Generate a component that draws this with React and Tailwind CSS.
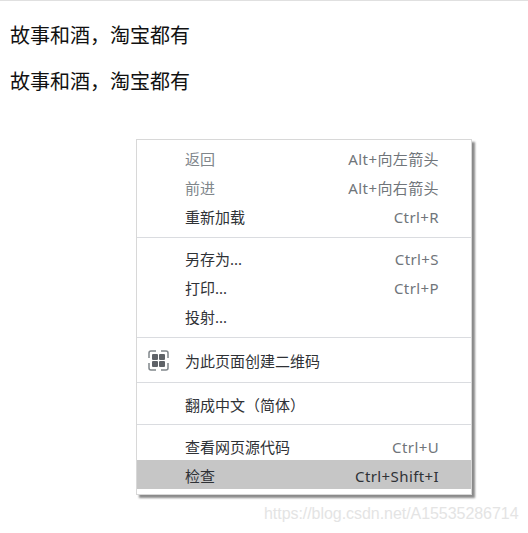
const menuFont = { fontFamily: '"Noto Sans", "Noto Sans CJK SC", sans-serif' };

function Qr() {
  return (
    <svg width="21" height="21" viewBox="0 0 21 21" fill="none">
      <path d="M1 8V3a2 2 0 0 1 2-2h5M13 1h5a2 2 0 0 1 2 2v5M20 13v5a2 2 0 0 1-2 2h-5M8 20H3a2 2 0 0 1-2-2v-5" stroke="#80868b" strokeWidth="1.500" />
      <rect x="4" y="4" width="6" height="6" rx="1" fill="#5f6368" />
      <rect x="11" y="4" width="6" height="6" rx="1" fill="#5f6368" />
      <rect x="4" y="11" width="6" height="6" rx="1" fill="#5f6368" />
      <rect x="11" y="11" width="6" height="6" rx="1" fill="#5f6368" />
    </svg>
  );
}

function Item({ label, keys, muted, active, icon, pad = "" }) {
  return (
    <div className={`relative flex h-[29px] items-center justify-between pl-[48px] pr-[32px] text-[15px] ${pad} ${active ? "bg-[#c6c6c6]" : ""}`}>
      {icon && <span className="absolute left-[11px] top-[4px]">{icon}</span>}
      <span className={muted ? "text-[#80868b]" : "text-[#2f3236]"}>{label}</span>
      {keys && <span className={`tracking-[0.4px] ${active ? "text-[#2f3236]" : "text-[#70757a]"}`}>{keys}</span>}
    </div>
  );
}

function Sep({ top, bottom }) {
  return <div className={`h-px bg-[#dadce0] ${top} ${bottom}`} />;
}

export default function App() {
  return (
    <div className="relative h-[533px] w-[528px] overflow-hidden border-t border-[#e0e0e0] bg-white">
      <div className="pl-[10px] pt-[22px] text-[20px] leading-[24px] text-[#111]" style={{ fontFamily: '"Noto Sans CJK SC", sans-serif' }}>
        <p>故事和酒，淘宝都有</p>
        <p className="mt-[22px]">故事和酒，淘宝都有</p>
      </div>

      <div
        className="absolute left-[136px] top-[138px] w-[336px] border border-[#d8d8d8] bg-white pb-[5px] pt-[5px] shadow-[3px_3px_2px_#8a8a8a]"
        style={menuFont}
      >
        <Item label="返回" keys="Alt+向左箭头" muted />
        <Item label="前进" keys="Alt+向右箭头" muted />
        <Item label="重新加载" keys="Ctrl+R" />
        <Sep top="mt-[5px]" bottom="mb-[7px]" />
        <Item label="另存为..." keys="Ctrl+S" />
        <Item label="打印..." keys="Ctrl+P" />
        <Item label="投射..." />
        <Sep top="mt-[5px]" bottom="mb-[8px]" />
        <Item label="为此页面创建二维码" icon={<Qr />} pad="pt-px" />
        <Sep top="mt-[7px]" bottom="mb-[7px]" />
        <Item label="翻成中文（简体）" pad="pt-px" />
        <Sep top="mt-[5px]" bottom="mb-[6px]" />
        <Item label="查看网页源代码" keys="Ctrl+U" pad="pt-[4px]" />
        <Item label="检查" keys="Ctrl+Shift+I" active pad="pt-[4px]" />
      </div>

      <div className="absolute left-[264px] top-[503px] text-[16px] leading-[20px] tracking-[-0.05px] text-[#e4e4e4]" style={{ fontFamily: '"Liberation Sans", sans-serif' }}>
        https://blog.csdn.net/A15535286714
      </div>
    </div>
  );
}
